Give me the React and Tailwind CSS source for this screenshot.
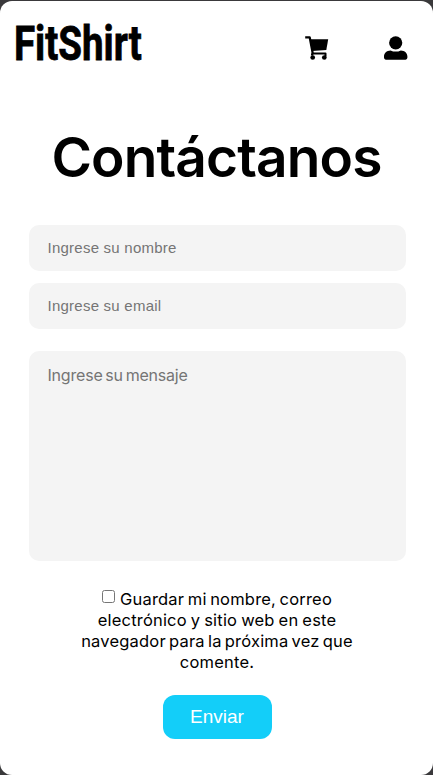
const field =
  "block w-[377px] rounded-[10px] bg-[#f4f4f4] pl-[19px] text-black outline-none placeholder:text-[#757575]";
const arialField = "text-[15px] tracking-[0.24px] pb-px font-['Liberation_Sans',sans-serif]";

function CartIcon() {
  return (
    <svg viewBox="0 0 24 24" className="h-6 w-6" aria-hidden="true">
      <path d="M.2 1.400h4.500l2.900 15.200-.6 3" fill="none" stroke="#000" strokeWidth="2.300" strokeLinejoin="round" />
      <path d="M5 3.200h18.200L21.300 14 7 14.900z" fill="#000" />
      <path d="M7.300 17.600h13.200v3" fill="none" stroke="#000" strokeWidth="2" strokeLinejoin="round" />
      <circle cx="7.700" cy="21.500" r="2.350" fill="#000" />
      <circle cx="19.300" cy="21.500" r="2.350" fill="#000" />
    </svg>
  );
}

function UserIcon() {
  return (
    <svg viewBox="0 0 24 24" className="h-6 w-6" fill="currentColor" aria-hidden="true">
      <circle cx="11.700" cy="6.800" r="6.600" />
      <path d="M6.600 14.400c1.600.8 3.300 1.200 5.100 1.200s3.500-.4 5.100-1.200c4 .1 6.600 2.700 6.600 6.200v1c0 1.200-.9 2.100-2 2.100H2c-1.200 0-2-.9-2-2.100v-1c0-3.500 2.600-6.100 6.600-6.200z" />
    </svg>
  );
}

export default function App() {
  return (
    <div className="h-[775px] w-[433px] overflow-hidden bg-[#3a393b] pt-px font-['Inter',sans-serif] text-black">
      <div className="flex h-[774px] flex-col items-center rounded-[12px] bg-white">
        <header className="flex h-[92px] w-full items-start justify-between pl-[14px] pr-[25px]">
          <a className="mt-[13px] block h-[60px] w-[128px] origin-left scale-x-[0.785] whitespace-nowrap font-['Roboto',sans-serif] text-[49px] font-bold leading-[60px] [-webkit-text-stroke:0.8px_black]">
            FitShirt
          </a>
          <nav className="mt-[35px] flex items-center gap-[55px]">
            <CartIcon />
            <UserIcon />
          </nav>
        </header>
        <h1 className="mt-[29px] h-[71px] whitespace-nowrap text-[55px] font-semibold leading-[70px] tracking-[-0.85px]">
          Contáctanos
        </h1>
        <form className="mt-[32px] flex flex-col items-center pl-px">
          <input placeholder="Ingrese su nombre" className={`${field} ${arialField} h-[46px]`} />
          <input placeholder="Ingrese su email" className={`${field} ${arialField} mt-[12px] h-[46px]`} />
          <textarea placeholder="Ingrese su mensaje" className={`${field} mt-[22px] h-[210px] resize-none pt-[14px] text-[16px] leading-[20px] tracking-[-0.200px] [word-spacing:-1.500px]`} />
          <label className="mt-[28px] flex flex-col items-center whitespace-nowrap text-[16.500px] leading-[21px] tracking-[0.200px]">
            <span className="flex items-center [word-spacing:-1.300px]">
              <input type="checkbox" className="mb-[6px] mr-[5px] h-[13px] w-[13px]" />
              <span>Guardar mi nombre, correo</span>
            </span>
            <span className="[word-spacing:-0.900px]">electrónico y sitio web en este</span>
            <span className="[word-spacing:-1.700px]">navegador para la próxima vez que</span>
            <span>comente.</span>
          </label>
          <button type="button" className="mt-[22px] h-[44px] w-[109px] rounded-[12px] bg-[#13cef9] pt-px font-['Liberation_Sans',sans-serif] text-[19px] text-white">
            Enviar
          </button>
        </form>
      </div>
    </div>
  );
}
